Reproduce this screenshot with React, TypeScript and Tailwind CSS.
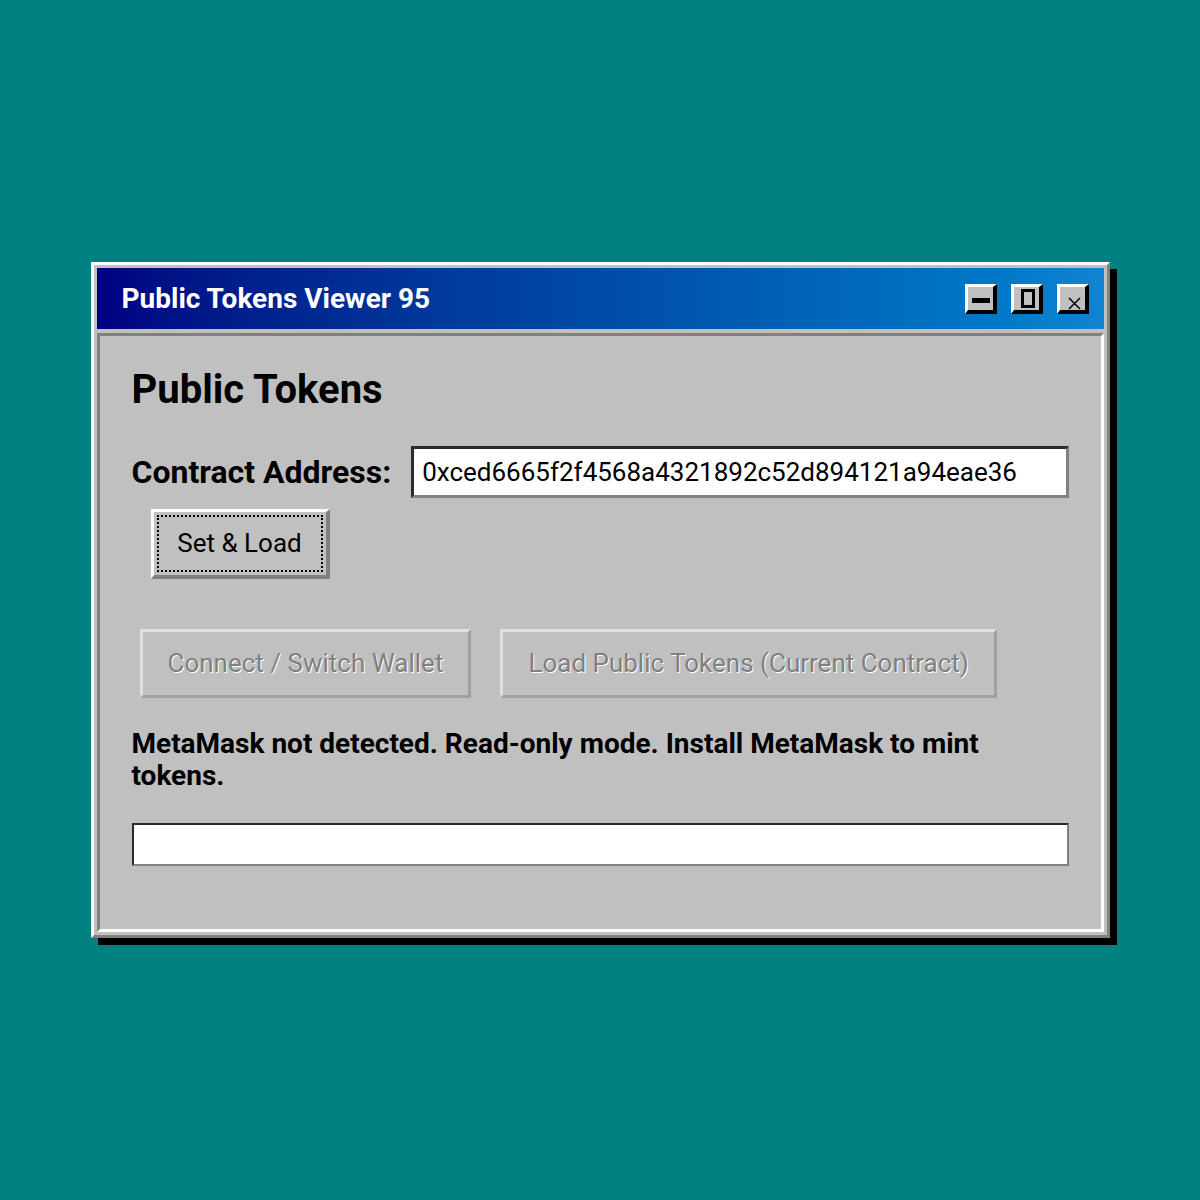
import React from 'react';

function TitleButton({ children }: { children: React.ReactNode }) {
    return (
        <div className="w-[32px] h-[30px] bg-[#c0c0c0] border-t-[3px] border-l-[3px] border-r-4 border-b-4 border-t-white border-l-white border-r-black border-b-black">
            <svg width="25" height="23" viewBox="0 0 25 23" className="block">
                {children}
            </svg>
        </div>
    );
}

function DisabledButton({ label }: { label: string }) {
    return (
        <button
            disabled
            className="h-[69px] px-[25px] bg-[#c0c0c0] border-[3px] border-t-[#e0e0e0] border-l-[#e0e0e0] border-r-[#a0a0a0] border-b-[#a0a0a0] text-[26px] text-[#808080] [text-shadow:1px_1px_0_#fff]"
        >
            {label}
        </button>
    );
}

export default function App() {
    return (
        <div className="h-[1200px] w-full bg-[#008080] flex items-center justify-center font-[family-name:Roboto,_'Liberation_Sans',_sans-serif]">
            <div className="w-[1019px] bg-[#c0c0c0] border-[3px] border-t-white border-l-white border-r-[#808080] border-b-[#808080] p-[3px] shadow-[7px_7px_0_#000]">
                {/* title bar */}
                <div className="h-[61px] bg-gradient-to-r from-[#000080] to-[#1084d0] flex items-center justify-between pl-[25px] pr-[15px]">
                    <span className="text-white font-bold text-[28px] leading-none">Public Tokens Viewer 95</span>
                    <div className="flex gap-[14px]">
                        <TitleButton>
                            <rect x="4" y="11" width="18" height="5" fill="#000" />
                        </TitleButton>
                        <TitleButton>
                            <rect x="8.5" y="3.5" width="11" height="16" fill="none" stroke="#000" strokeWidth="3" />
                        </TitleButton>
                        <TitleButton>
                            <path d="M9 11 L20 22 M20 11 L9 22" stroke="#000" strokeWidth="1.5" />
                        </TitleButton>
                    </div>
                </div>

                {/* body */}
                <div className="mt-[4px] border-[3px] border-t-[#808080] border-l-[#808080] border-r-white border-b-white px-[32px] pt-[34px] pb-[63px] text-black">
                    <h1 className="text-[40px] leading-[40px] font-bold">Public Tokens</h1>

                    <div className="mt-[36px] flex items-center gap-[20px]">
                        <label className="text-[32px] font-bold leading-none whitespace-nowrap">Contract Address:</label>
                        <div className="flex-1 h-[52px] bg-white border-[3px] border-t-[#2a2a2a] border-l-[#2a2a2a] border-r-[#808080] border-b-[#808080] px-[8px] flex items-center text-[26px]">
                            0xced6665f2f4568a4321892c52d894121a94eae36
                        </div>
                    </div>

                    <button className="mt-[11px] ml-[19px] w-[179px] h-[70px] bg-[#c0c0c0] border-t-[3px] border-l-[3px] border-r-4 border-b-4 border-t-white border-l-white border-r-[#808080] border-b-[#808080] p-[3px] block">
                        <div className="w-full h-full border-2 border-dotted border-black flex items-center justify-center text-[26px]">
                            Set &amp; Load
                        </div>
                    </button>

                    <div className="mt-[50px] ml-[8px] flex gap-[29px]">
                        <DisabledButton label="Connect / Switch Wallet" />
                        <DisabledButton label="Load Public Tokens (Current Contract)" />
                    </div>

                    <p className="mt-[30px] max-w-[900px] text-[28px] leading-[32px] font-bold">
                        MetaMask not detected. Read-only mode. Install MetaMask to mint tokens.
                    </p>

                    <div className="mt-[31px] h-[43px] bg-white border-2 border-t-[#2a2a2a] border-l-[#2a2a2a] border-r-[#808080] border-b-[#808080]" />
                </div>
            </div>
        </div>
    );
}
